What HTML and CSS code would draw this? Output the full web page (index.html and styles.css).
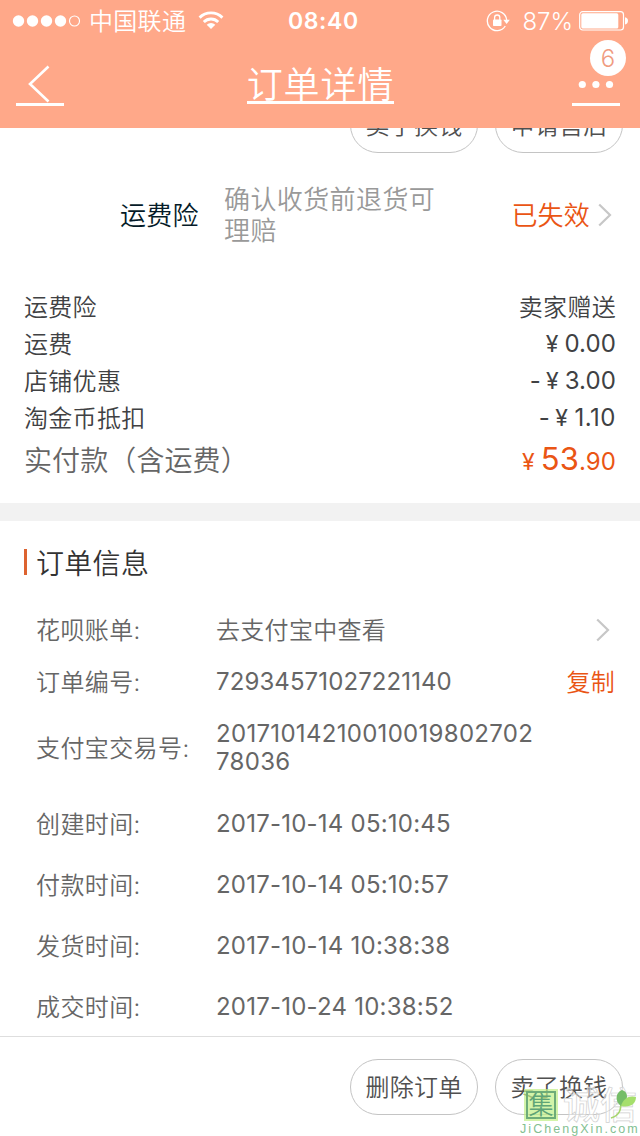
FILE: index.html
```html
<!DOCTYPE html>
<html lang="zh-CN">
<head>
<meta charset="utf-8">
<title>订单详情</title>
<link rel="stylesheet" href="styles.css">
</head>
<body>
<div class="screen">
  <header class="header">
    <div class="status">
      <div class="carrier">
        <svg width="68" height="14" viewBox="0 0 68 14"><g fill="#fff"><circle cx="6.5" cy="7" r="5.7"/><circle cx="20.5" cy="7" r="5.7"/><circle cx="34.5" cy="7" r="5.7"/><circle cx="48.500" cy="7" r="5.7"/></g><circle cx="62.500" cy="7" r="5" fill="none" stroke="#fff" stroke-width="1.100"/></svg>
        <span class="carrier-name">中国联通</span>
        <svg class="wifi" width="26" height="20" viewBox="0 0 26 20"><g fill="none" stroke="#fff" stroke-width="2.900"><path d="M1.600 7.600a16.200 16.200 0 0 1 22.800 0"/><path d="M5.800 12a10.300 10.300 0 0 1 14.400 0"/></g><path d="M13 19l-4.300-4.300a6.200 6.200 0 0 1 8.600 0z" fill="#fff"/></svg>
      </div>
      <time class="clock">08:40</time>
      <div class="power">
        <svg width="24" height="22" viewBox="0 0 24 22"><path d="M19.300 16A9.700 9.700 0 1 1 20.700 10" fill="none" stroke="#fff" stroke-width="1.300"/><path d="M17.300 9.800h6.500l-3.200 4.200z" fill="#fff"/><rect x="7" y="9.500" width="8.500" height="6.500" rx=".8" fill="#fff"/><path d="M8.600 10V7.600a2.600 2.600 0 0 1 5.200 0V10" fill="none" stroke="#fff" stroke-width="1.300"/></svg>
        <span class="percent">87%</span>
        <svg class="battery" width="50" height="20" viewBox="0 0 50 20"><rect x=".7" y=".7" width="43.800" height="18.300" rx="3" fill="none" stroke="#fff" stroke-width="1.200"/><rect x="2.300" y="2.300" width="37" height="15.200" rx="1.500" fill="#fff"/><path d="M46 6.300c4 .5 4 6.700 0 7.200z" fill="#fff"/></svg>
      </div>
    </div>
    <nav class="nav">
      <a class="nav-btn"><svg width="48" height="42" viewBox="0 0 48 42"><path d="M32.500 3.500L14 21l18.500 17.500" fill="none" stroke="#fff" stroke-width="2.600"/></svg></a>
      <h1 class="title">订单详情</h1>
      <a class="nav-btn"><svg width="48" height="42" viewBox="0 0 48 42"><g fill="#fff"><circle cx="10.300" cy="21.500" r="3.600"/><circle cx="23.900" cy="21.500" r="3.600"/><circle cx="37.500" cy="21.500" r="3.600"/></g></svg><span class="badge">6</span></a>
    </nav>
  </header>
  <main class="content">
    <div class="actions actions-cut"><span class="pill">卖了换钱</span><span class="pill">申请售后</span></div>
    <section class="insurance">
      <span class="ins-name">运费险</span>
      <span class="ins-desc">确认收货前退货可理赔</span>
      <span class="ins-state">已失效</span>
      <svg class="chevron" width="14" height="24" viewBox="0 0 14 24"><path d="M1.200 1.500L12 12 1.200 22.500" fill="none" stroke="#c7c7c7" stroke-width="2.200"/></svg>
    </section>
    <section class="prices">
      <div class="price"><span class="cjk">运费险</span><span class="cjk">卖家赠送</span></div>
      <div class="price"><span class="cjk">运费</span><span class="amount"><i class="yen">¥</i>0.00</span></div>
      <div class="price"><span class="cjk">店铺优惠</span><span class="amount">-<i class="yen dash">¥</i>3.00</span></div>
      <div class="price"><span class="cjk">淘金币抵扣</span><span class="amount tenth">-<i class="yen dash">¥</i>1.10</span></div>
      <div class="price total"><span class="cjk">实付款（含运费）</span><span class="amount paid"><i class="yen">¥</i><b>53</b>.90</span></div>
    </section>
    <section class="info">
      <h2 class="info-title">订单信息</h2>
      <div class="row"><span class="label">花呗账单:</span><span class="value cn">去支付宝中查看</span><svg class="chevron row-end" width="14" height="24" viewBox="0 0 14 24"><path d="M1.200 1.500L12 12 1.200 22.500" fill="none" stroke="#c7c7c7" stroke-width="2.200"/></svg></div>
      <div class="row"><span class="label">订单编号:</span><span class="value num">72934571027221140</span><span class="copy">复制</span></div>
      <div class="row trade"><span class="label">支付宝交易号:</span><span class="value long">20171014210010019802702<br>78036</span></div>
      <div class="row date"><span class="label">创建时间:</span><span class="value">2017-10-14 05:10:45</span></div>
      <div class="row date"><span class="label">付款时间:</span><span class="value">2017-10-14 05:10:57</span></div>
      <div class="row date"><span class="label">发货时间:</span><span class="value">2017-10-14 10:38:38</span></div>
      <div class="row date"><span class="label">成交时间:</span><span class="value">2017-10-24 10:38:52</span></div>
    </section>
  </main>
  <footer class="footer">
    <div class="actions"><span class="pill">删除订单</span><span class="pill">卖了换钱</span></div>
    <div class="watermark">
      <div class="mark-top"><span class="seal"><span>集</span></span><span class="mark-name">诚信</span></div>
      <div class="mark-url">JiChengXin.com</div>
      <svg class="leaf" width="30" height="32" viewBox="0 0 30 32"><path d="M2 30C11 27 12 22 12 13" fill="none" stroke="#a5d66c" stroke-width="1.600"/><path d="M12 18C5 13 7 4 13 2c7 2 6 10 1 16z" fill="#75bd68"/><path d="M12 18C14 10 21 7 27 9c0 7-6 11-15 9z" fill="#a5df6c"/></svg>
    </div>
  </footer>
</div>
</body>
</html>
```
FILE: styles.css
```css
* { box-sizing: border-box; }
body {
  margin: 0;
  background: #fff;
  color: #404143;
  font-family: Inter, "Noto Sans CJK SC", sans-serif;
  font-weight: 350;
}
svg { display: block; flex: none; }
h1, h2 { margin: 0; font-weight: 350; }
.screen { position: relative; width: 640px; height: 1136px; display: flex; flex-direction: column; overflow: hidden; }

.header { height: 128px; flex: none; background: #ffa889; color: #fff; }
.status { height: 40px; padding: 1px 11px 0 12px; display: grid; grid-template-columns: 276px auto 1fr; align-items: center; line-height: 39px; white-space: nowrap; }
.carrier { display: flex; align-items: center; }
.carrier-name { padding-top: 1px; font-size: 24px; letter-spacing: .3px; margin-left: 9px; }
.wifi { margin-left: 12px; margin-top: -2px; }
.clock { padding-top: 1px; font-size: 23px; font-weight: 600; letter-spacing: .6px; }
.power { display: flex; align-items: center; justify-content: flex-end; }
.percent { padding-top: 1px; font-size: 24px; margin: 0 6px 0 12px; }
.nav { height: 88px; padding: 0 20px 0 16px; display: flex; justify-content: space-between; }
.nav-btn { position: relative; width: 48px; height: 66px; padding-top: 23px; border-bottom: 3px solid #fff; }
.badge { position: absolute; right: -6px; top: 0; width: 36px; height: 36px; border-radius: 50%; background: #fff; color: #f09b7f; font-size: 24px; line-height: 37px; text-align: center; }
.title { margin: 23px 0 0 5px; height: 41px; padding-top: 3px; border-bottom: 3px solid #fff; font-size: 36px; line-height: 39px; letter-spacing: .9px; }

.content { flex: 1; }
.actions { display: flex; justify-content: flex-end; gap: 17px; padding-right: 17px; }
.actions-cut { height: 25px; overflow: hidden; align-items: flex-end; }
.pill { flex: none; width: 128px; height: 56px; border: 1px solid #c4c4c4; border-radius: 28px; font-size: 24px; line-height: 56px; letter-spacing: .3px; text-align: center; color: #505050; }

.insurance { height: 124px; padding: 0 28px 0 120px; display: flex; align-items: center; font-size: 26px; line-height: 31px; letter-spacing: .2px; }
.ins-name { width: 104px; padding-top: 1px; color: #051b28; }
.ins-desc { width: 216px; color: #999; letter-spacing: .4px; }
.ins-state { padding-top: 1px; margin-left: auto; margin-right: 8px; color: #ea5514; }

.prices { height: 226px; padding: 11px 24px 0; }
.price { height: 37px; display: flex; justify-content: space-between; align-items: center; font-size: 24px; line-height: 37px; letter-spacing: .3px; }
.cjk { padding-top: 2px; }
.amount { font-weight: 400; letter-spacing: .1px; }
.tenth { letter-spacing: .5px; }
.yen { font-style: normal; font-size: 23px; margin-right: 6px; }
.dash { margin-left: 5px; }
.total { height: 48px; font-size: 28px; color: #666; }
.total .cjk { letter-spacing: .1px; }
.paid { font-size: 24px; color: #ea5514; }
.paid b { font-size: 31px; font-weight: 400; }

.info { border-top: 18px solid #f2f2f2; padding: 28px 25px 0 24px; }
.info-title { height: 26px; padding-left: 9px; border-left: 3px solid #dd6330; font-size: 28px; line-height: 30px; letter-spacing: .3px; color: #333; }
.row { height: 52px; padding-left: 12px; display: flex; align-items: center; font-size: 24px; line-height: 28px; color: #666; }
.info-title + .row { margin-top: 29px; }
.label { width: 180px; padding-top: 2px; letter-spacing: .4px; }
.value { font-weight: 400; letter-spacing: .22px; white-space: nowrap; }
.num { letter-spacing: .1px; }
.long { letter-spacing: .3px; }
.cn { padding-top: 2px; font-weight: 350; letter-spacing: .3px; }
.row-end { margin-left: auto; margin-right: 5px; }
.copy { padding-top: 2px; margin-left: auto; color: #ea5514; letter-spacing: .3px; }
.trade { height: 80px; margin-bottom: 5px; }
.date { height: 61px; }
.date:last-child { height: 60px; padding-top: 1px; }

.footer { position: relative; height: 100px; flex: none; border-top: 1px solid #dedede; padding-top: 22px; background: #fff; }
.watermark { position: absolute; left: 520px; top: 52px; width: 120px; height: 48px; }
.mark-top { height: 32px; display: flex; gap: 5px; padding-left: 4px; }
.seal { width: 34px; height: 32px; padding: 2px; background: rgba(193, 239, 133, .7); }
.seal span { display: block; height: 28px; border: 2px solid #6eac79; font-size: 25px; line-height: 25px; text-align: center; color: #5fa477; }
.mark-name { font-size: 37px; line-height: 34px; color: rgba(255, 255, 255, .45); -webkit-text-stroke: .7px #d0d0d0; font-weight: 500; white-space: nowrap; }
.mark-url { padding-top: 1px; font-family: "Liberation Sans", sans-serif; font-size: 12.5px; line-height: 14px; letter-spacing: 2.050px; color: #83bf92; font-weight: 400; white-space: nowrap; }
.leaf { position: absolute; left: 89px; top: -1px; }
```
